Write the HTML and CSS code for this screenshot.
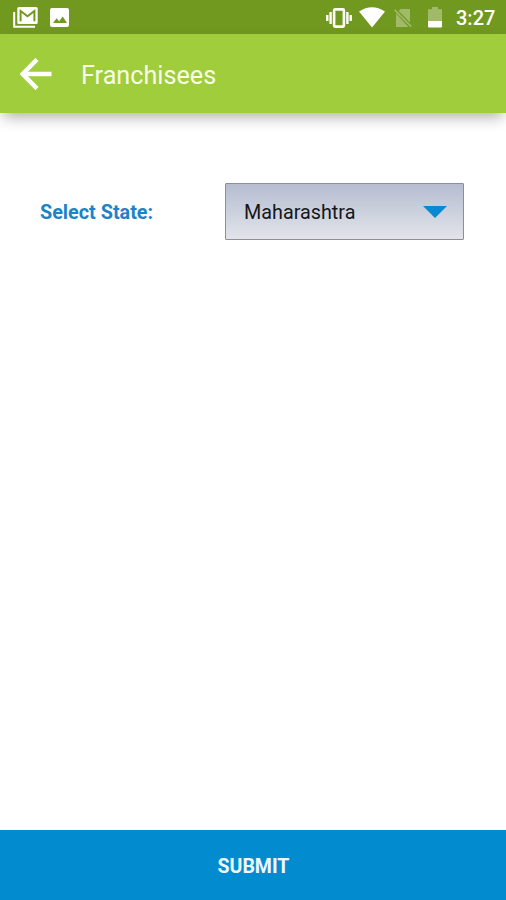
FILE: index.html
```html
<!DOCTYPE html>
<html lang="en">
<head>
<meta charset="utf-8">
<title>Franchisees</title>
<link rel="stylesheet" href="styles.css">
</head>
<body>
<div class="screen">
  <div class="status">
    <svg class="mail" width="25" height="21" viewBox="0 0 25 21" fill="none">
      <path d="M1.2 5v14.7H22" stroke="#fff" stroke-width="2"/>
      <rect x="4.3" y="0" width="20.4" height="17" rx="1.6" fill="#fff"/>
      <path d="M7.6 14.2V4l6.9 5.2L21.4 4v10.2" stroke="#71981f" stroke-width="2"/>
    </svg>
    <svg class="photo" width="19" height="19" viewBox="0 0 19 19">
      <rect width="19" height="19" rx="2" fill="#fff"/>
      <path d="M3 15l3.6-4.7 2.5 3 3.6-4.7L17 15z" fill="#71981f"/>
    </svg>
    <svg class="vibrate" width="26" height="20" viewBox="0 0 26 20" fill="none" stroke="#fff">
      <rect x="8.1" y="1.4" width="9.8" height="17.2" rx="1" stroke-width="2.6"/>
      <path d="M4.6 4v12M21.4 4v12M1.3 7v6M24.7 7v6" stroke-width="2.4"/>
    </svg>
    <svg class="wifi" width="26" height="21" viewBox="0 0 26 21">
      <path d="M0 4.5Q13-4 26 4.5L13 20.5z" fill="#fff"/>
    </svg>
    <svg class="sim" width="18" height="20" viewBox="0 0 18 20">
      <path d="M6.3 1H16v13.5L4.7 3.1zM2 5.5L14.5 19H2z" fill="#a0ba69"/>
      <path d="M.6 1.9l16.6 16.8" stroke="#a0ba69" stroke-width="1.7"/>
    </svg>
    <svg class="battery" width="14" height="21" viewBox="0 0 14 21">
      <path d="M4 0h6v2.2h4V14H0V2.2h4z" fill="#a0ba69"/>
      <path d="M0 14h14v5.5a1 1 0 0 1-1 1H1a1 1 0 0 1-1-1z" fill="#fff"/>
    </svg>
    <span class="clock">3:27</span>
  </div>
  <header class="appbar">
    <svg class="back" width="32" height="32" viewBox="0 0 32 32" fill="none" stroke="#fff" stroke-width="4.4">
      <path d="M31.5 16H3M17 1.4L2.7 16 17 30.6"/>
    </svg>
    <h1 class="title">Franchisees</h1>
  </header>
  <main class="form">
    <span class="label">Select State:</span>
    <div class="select">
      <span>Maharashtra</span>
      <svg width="24" height="12" viewBox="0 0 24 12"><path d="M0 0h24L12 12z" fill="#078ad1"/></svg>
    </div>
  </main>
  <button class="submit">SUBMIT</button>
</div>
</body>
</html>
```
FILE: styles.css
```css
* { box-sizing: border-box; }
body { margin: 0; font-family: Roboto, sans-serif; background: #fff; }
.screen { height: 900px; display: flex; flex-direction: column; overflow: hidden; }
.status { height: 34px; flex: none; display: flex; align-items: center; padding: 1px 11px 0 13px; background: #71981f; }
.status svg { flex: none; }
.photo { margin-left: 12px; }
.vibrate { margin-left: auto; }
.wifi { margin-left: 7px; }
.sim { margin-left: 9px; }
.battery { margin-left: 16px; }
.clock { width: 39px; margin-left: 14px; font-size: 20px; font-weight: 500; line-height: 34px; color: #fff; white-space: nowrap; }
.appbar { height: 79px; flex: none; display: flex; align-items: center; padding-left: 20px; background: #9fcd3b; box-shadow: 0 7px 14px -3px rgba(0, 0, 0, .32); }
.title { margin: 4px 0 0 29px; font-size: 25.2px; font-weight: 400; line-height: 32px; color: #fafde9; }
.form { flex: 1; display: flex; align-items: flex-start; padding: 70px 42px 0 40px; }
.label { width: 185px; flex: none; font-size: 19.8px; font-weight: 700; line-height: 59px; color: #1c84c6; }
.select { flex: 1; height: 57px; display: flex; align-items: center; justify-content: space-between; padding: 0 16px 0 18px; border: 1px solid #8c8f96; border-radius: 1px; background: linear-gradient(#b5bdd0, #e2e4ea); font-size: 19.8px; color: #15171c; }
.select span { padding-top: 2px; }
.submit { height: 70px; flex: none; border: 0; padding: 3px 0 0 1px; background: #038bd0; color: #eef8ff; font: 700 19.5px Roboto, sans-serif; }
```
